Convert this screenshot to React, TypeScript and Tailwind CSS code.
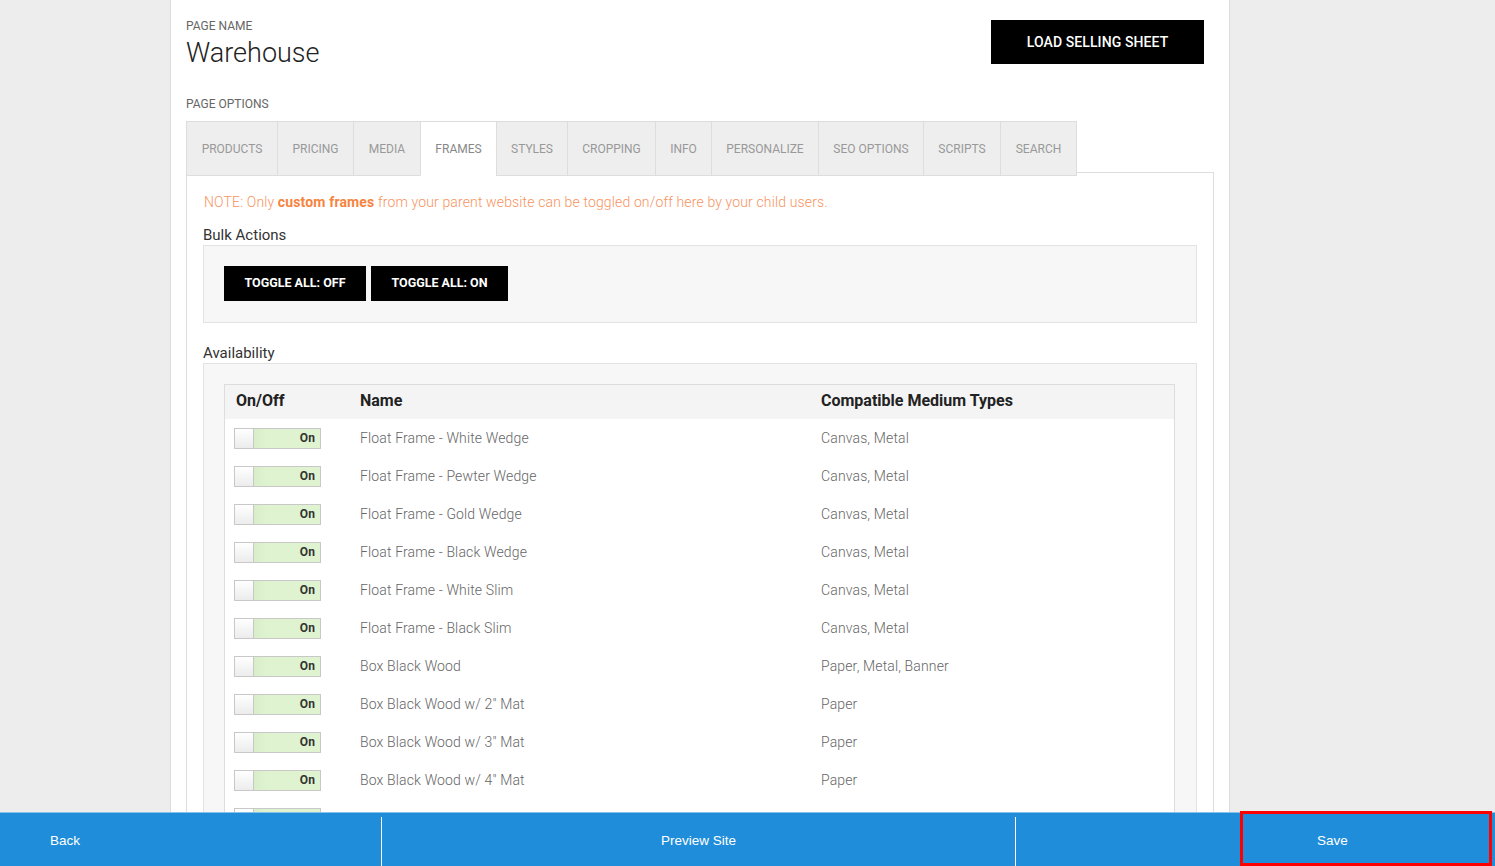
import React from "react";

const tabs: [string, number][] = [
  ["PRODUCTS", 91],
  ["PRICING", 76],
  ["MEDIA", 67],
  ["FRAMES", 76],
  ["STYLES", 71],
  ["CROPPING", 88],
  ["INFO", 56],
  ["PERSONALIZE", 107],
  ["SEO OPTIONS", 105],
  ["SCRIPTS", 77],
  ["SEARCH", 77],
];

const rows: [string, string][] = [
  ["Float Frame - White Wedge", "Canvas, Metal"],
  ["Float Frame - Pewter Wedge", "Canvas, Metal"],
  ["Float Frame - Gold Wedge", "Canvas, Metal"],
  ["Float Frame - Black Wedge", "Canvas, Metal"],
  ["Float Frame - White Slim", "Canvas, Metal"],
  ["Float Frame - Black Slim", "Canvas, Metal"],
  ["Box Black Wood", "Paper, Metal, Banner"],
  ['Box Black Wood w/ 2" Mat', "Paper"],
  ['Box Black Wood w/ 3" Mat', "Paper"],
  ['Box Black Wood w/ 4" Mat', "Paper"],
  ["Box White Wood", "Paper, Metal, Banner"],
  ['Box White Wood w/ 2" Mat', "Paper"],
  ['Box White Wood w/ 3" Mat', "Paper"],
];

function Toggle() {
  return (
    <div className="flex h-[21px] w-[87px] border border-[#c8c8c8] bg-[#dff3d0]">
      <div className="h-full w-[19px] border-r border-[#c8c8c8] bg-gradient-to-b from-white to-[#ececec]" />
      <div className="flex flex-1 items-center justify-end bg-gradient-to-r from-[#d8eec8] via-[#dff3d0] via-[20%] to-[#dff3d0] pr-[5px] text-[12px] font-bold text-[#333]">
        On
      </div>
    </div>
  );
}

export default function App() {
  return (
    <div
      className="min-h-screen bg-[#ecedec]"
      style={{ fontFamily: "Roboto, 'Liberation Sans', sans-serif" }}
    >
      <div className="ml-[170px] w-[1060px] border-x border-[#dcdcdc] bg-white px-[15px] pb-[80px]">
        <div className="flex justify-between">
          <div className="pt-[19px]">
            <div className="text-[12px] leading-[14px] text-[#666]">PAGE NAME</div>
            <div className="mt-[2px] text-[27px] font-light leading-[36px] text-[#222]">
              Warehouse
            </div>
          </div>
          <button className="mr-[10px] mt-[20px] h-[44px] w-[213px] bg-black text-[14px] font-medium tracking-[0.1px] text-white">
            LOAD SELLING SHEET
          </button>
        </div>
        <div className="mt-[26px] text-[12px] leading-[14px] text-[#666]">PAGE OPTIONS</div>

        <div className="relative z-10 mt-[10px] -mb-[4px] flex">
          {tabs.map(([t, w], i) => {
            const active = t === "FRAMES";
            return (
              <div
                key={t}
                style={{ width: w }}
                className={
                  "flex h-[55px] items-center justify-center border-t border-l border-[#dddddd] text-[12px] " +
                  (active
                    ? "border-b border-b-white bg-white text-[#888]"
                    : "border-b bg-[#eeeeee] text-[#999]") +
                  (i === tabs.length - 1 ? " border-r" : "")
                }
              >
                {t}
              </div>
            );
          })}
        </div>

        <div className="border border-[#dddddd] px-[16px] pt-[19px] pb-[20px]">
          <div className="pl-[1px] text-[14px] font-light leading-[20px] tracking-[0.14px] text-[#f7935e]">
            NOTE: Only <span className="font-bold text-[#f6843f]">custom frames</span> from your
            parent website can be toggled on/off here by your child users.
          </div>
          <div className="mt-[13px] text-[15px] leading-[20px] text-[#333]">Bulk Actions</div>
          <div className="flex gap-[5px] border border-[#e3e3e3] bg-[#f7f7f7] px-[20px] pt-[20px] pb-[21px]">
            <button className="h-[35px] w-[142px] bg-black text-[12.5px] font-bold text-white">
              TOGGLE ALL: OFF
            </button>
            <button className="h-[35px] w-[137px] bg-black text-[12.5px] font-bold text-white">
              TOGGLE ALL: ON
            </button>
          </div>

          <div className="mt-[20px] text-[15px] leading-[20px] text-[#333]">Availability</div>
          <div className="border border-[#e3e3e3] bg-[#f7f7f7] pl-[20px] pr-[21px] pt-[20px] pb-[20px]">
            <div className="border border-[#dddddd] bg-white">
              <div className="flex h-[34px] items-center bg-[#f4f4f4] pb-[3px] text-[16px] font-bold text-[#222]">
                <div className="w-[124px] pl-[11px]">On/Off</div>
                <div className="w-[461px] pl-[11px]">Name</div>
                <div className="flex-1 pl-[11px]">Compatible Medium Types</div>
              </div>
              {rows.map(([n, m]) => (
                <div
                  key={n}
                  className="flex h-[38px] items-center text-[14px] font-light tracking-[0.14px] text-[#666]"
                >
                  <div className="w-[124px] pl-[9px]">
                    <Toggle />
                  </div>
                  <div className="w-[461px] pl-[11px]">{n}</div>
                  <div className="flex-1 pl-[11px]">{m}</div>
                </div>
              ))}
            </div>
          </div>
        </div>
      </div>

      <div
        className="fixed bottom-0 left-0 flex h-[54px] w-full border-t border-[#86c1ea] bg-[#1f8dd9] pt-[4px] text-[13.5px] text-white"
        style={{ fontFamily: "'Liberation Sans', Arial, sans-serif" }}
      >
        <div className="flex w-[382px] items-center border-r border-white pl-[50px]">Back</div>
        <div className="flex w-[634px] items-center justify-center border-r border-white">
          Preview Site
        </div>
        <div className="flex flex-1 items-center pl-[301px]">Save</div>
        <div className="absolute -top-[2px] left-[1240px] h-[55px] w-[252px] border-[3px] border-[#ff0000]" />
      </div>
    </div>
  );
}
